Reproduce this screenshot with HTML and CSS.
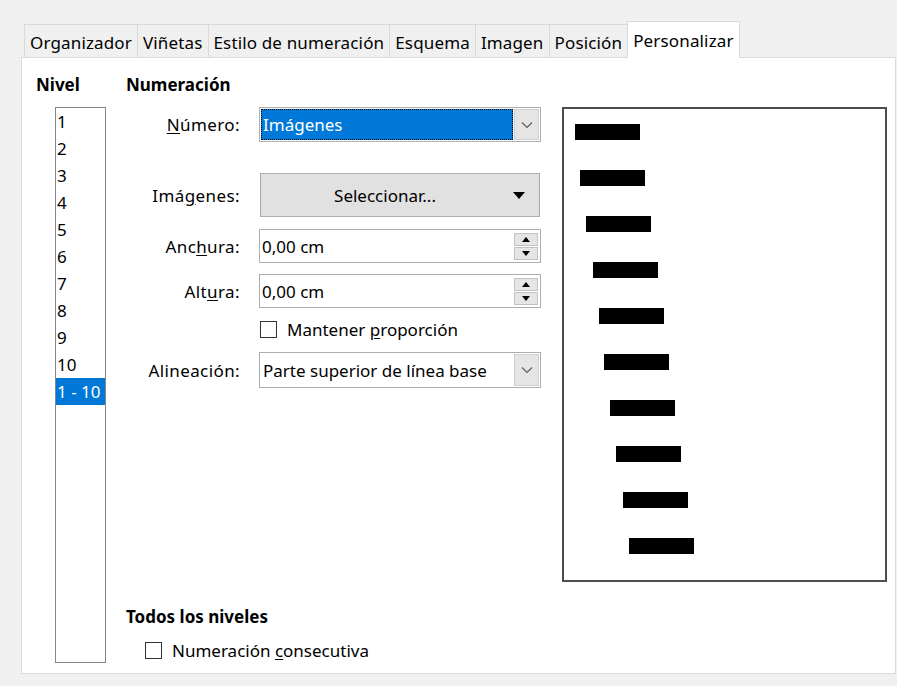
FILE: index.html
```html
<!DOCTYPE html>
<html lang="es">
<head>
<meta charset="utf-8">
<title>Numeración y viñetas</title>
<link rel="stylesheet" href="styles.css">
</head>
<body>
<div class="dialog">
  <div class="tabs">
    <div class="tab">Organizador</div>
    <div class="tab">Viñetas</div>
    <div class="tab">Estilo de numeración</div>
    <div class="tab">Esquema</div>
    <div class="tab">Imagen</div>
    <div class="tab">Posición</div>
    <div class="tab active">Personalizar</div>
  </div>
  <div class="panel">
    <div class="level-col">
      <div class="heading">Nivel</div>
      <ul class="level-list">
        <li>1</li><li>2</li><li>3</li><li>4</li><li>5</li>
        <li>6</li><li>7</li><li>8</li><li>9</li><li>10</li>
        <li class="selected">1 - 10</li>
      </ul>
    </div>
    <div class="main-col">
      <div class="heading">Numeración</div>
      <div class="content">
        <div class="form">
          <div class="row row-number">
            <label class="label"><u>N</u>úmero:</label>
            <div class="combo focused">
              <span class="combo-value">Imágenes</span>
              <span class="combo-btn"><svg width="12" height="8" viewBox="0 0 12 8"><polyline points="1,1.5 6,6.5 11,1.5" fill="none" stroke="#606060" stroke-width="1.2"/></svg></span>
            </div>
          </div>
          <div class="row row-images">
            <label class="label">Imá<u>g</u>enes:</label>
            <div class="menu-btn">
              <span class="menu-text">Seleccionar...</span>
              <svg class="menu-arrow" width="12" height="7" viewBox="0 0 12 7"><polygon points="0,0 12,0 6,7" fill="#000"/></svg>
            </div>
          </div>
          <div class="row row-width">
            <label class="label">Anc<u>h</u>ura:</label>
            <div class="spin">
              <span class="spin-value">0,00 cm</span>
              <span class="spin-btns">
                <span class="spin-btn"><svg width="8" height="5" viewBox="0 0 8 5"><polygon points="0,5 8,5 4,0" fill="#000"/></svg></span>
                <span class="spin-btn"><svg width="8" height="5" viewBox="0 0 8 5"><polygon points="0,0 8,0 4,5" fill="#000"/></svg></span>
              </span>
            </div>
          </div>
          <div class="row row-height">
            <label class="label">Alt<u>u</u>ra:</label>
            <div class="spin">
              <span class="spin-value">0,00 cm</span>
              <span class="spin-btns">
                <span class="spin-btn"><svg width="8" height="5" viewBox="0 0 8 5"><polygon points="0,5 8,5 4,0" fill="#000"/></svg></span>
                <span class="spin-btn"><svg width="8" height="5" viewBox="0 0 8 5"><polygon points="0,0 8,0 4,5" fill="#000"/></svg></span>
              </span>
            </div>
          </div>
          <div class="row row-check">
            <span class="label"></span>
            <label class="check"><span class="box"></span><span>Mantener <u>p</u>roporción</span></label>
          </div>
          <div class="row row-align">
            <label class="label">Alineación:</label>
            <div class="combo">
              <span class="combo-value">Parte superior de línea base</span>
              <span class="combo-btn"><svg width="12" height="8" viewBox="0 0 12 8"><polyline points="1,1.5 6,6.5 11,1.5" fill="none" stroke="#606060" stroke-width="1.2"/></svg></span>
            </div>
          </div>
        </div>
        <div class="preview">
          <span class="bar" style="margin-left:0px"></span>
          <span class="bar" style="margin-left:5px"></span>
          <span class="bar" style="margin-left:11px"></span>
          <span class="bar" style="margin-left:18px"></span>
          <span class="bar" style="margin-left:24px"></span>
          <span class="bar" style="margin-left:29px"></span>
          <span class="bar" style="margin-left:35px"></span>
          <span class="bar" style="margin-left:41px"></span>
          <span class="bar" style="margin-left:48px"></span>
          <span class="bar" style="margin-left:54px"></span>
        </div>
      </div>
      <div class="heading all-levels">Todos los niveles</div>
      <label class="check consecutive"><span class="box"></span><span>Numeración <u>c</u>onsecutiva</span></label>
    </div>
  </div>
</div>
</body>
</html>
```
FILE: styles.css
```css
* {
  box-sizing: border-box;
}

html, body {
  margin: 0;
  background: #f0f0f0;
}

body {
  font-family: "Noto Sans", "Open Sans", sans-serif;
  font-size: 17px;
  color: #000;
}

u {
  text-decoration: underline;
  text-underline-offset: 2px;
}

.dialog {
  width: 897px;
  height: 686px;
  padding: 21px 1px 0 21px;
}

/* tab strip */
.tabs {
  display: flex;
  align-items: flex-end;
  height: 36px;
  padding-left: 3px;
}

.tab {
  height: 33px;
  line-height: 31px;
  padding: 2px 5px 0;
  border: 1px solid #d9d9d9;
  border-bottom: none;
  margin-right: -1px;
  background: #f0f0f0;
  white-space: nowrap;
  letter-spacing: 0.15px;
}

.tab.active {
  height: 37px;
  padding-top: 3px;
  margin-bottom: -1px;
  background: #fff;
  position: relative;
  z-index: 1;
}

/* page body */
.panel {
  height: 617px;
  background: #fff;
  border: 1px solid #dadada;
  display: flex;
  padding: 17px 8px 0 14px;
  gap: 20px;
}

.heading {
  font-weight: bold;
  line-height: 20px;
  height: 20px;
  letter-spacing: 0;
  white-space: nowrap;
}

.level-col {
  width: 70px;
  flex: none;
}

.level-list {
  list-style: none;
  margin: 12px 0 0 19px;
  padding: 0;
  width: 51px;
  height: 556px;
  border: 1px solid #828790;
  background: #fff;
}

.level-list li {
  height: 27px;
  line-height: 27px;
  padding-left: 1px;
  white-space: nowrap;
}

.level-list li.selected {
  background: #0078d7;
  color: #fff;
}

.main-col {
  flex: 1;
  display: flex;
  flex-direction: column;
}

.content {
  display: flex;
  margin-top: 12px;
  height: 475px;
}

/* left-hand form */
.form {
  width: 415px;
  flex: none;
}

.row {
  display: flex;
  align-items: center;
}

.label {
  width: 114px;
  margin-right: 19px;
  text-align: right;
  flex: none;
  white-space: nowrap;
  letter-spacing: 0.4px;
}

.row-number { height: 35px; }
.row-images { height: 44px; margin-top: 31px; }
.row-width { height: 34px; margin-top: 12px; }
.row-height { height: 34px; margin-top: 11px; }
.row-check { height: 22px; margin-top: 10px; }
.row-align { height: 36px; margin-top: 12px; }

.combo {
  width: 282px;
  height: 100%;
  display: flex;
  border: 1px solid #adadad;
  background: #fff;
  padding: 1px;
}

.combo-value {
  flex: 1;
  display: flex;
  align-items: center;
  padding-left: 2px;
  white-space: nowrap;
  overflow: hidden;
}

.combo.focused .combo-value {
  background: #0078d7;
  color: #fff;
  outline: 1px dotted #000;
  outline-offset: -1px;
  border: 1px dotted #fff;
  padding-left: 1px;
}

.combo-btn {
  width: 25px;
  flex: none;
  margin-left: 1px;
  display: flex;
  align-items: center;
  justify-content: center;
  background: #e5e5e5;
  border: 1px solid #cfcfcf;
}

.menu-btn {
  width: 280px;
  margin-left: 1px;
  height: 100%;
  display: flex;
  align-items: center;
  background: #e1e1e1;
  border: 1px solid #adadad;
}

.menu-text {
  flex: 1;
  text-align: center;
  padding-right: 4px;
}

.menu-arrow {
  margin-right: 14px;
}

.spin {
  width: 282px;
  height: 100%;
  display: flex;
  align-items: center;
  border: 1px solid #adadad;
  background: #fff;
  padding: 0 2px 0 2px;
}

.spin-value {
  flex: 1;
}

.spin-btns {
  display: flex;
  flex-direction: column;
  width: 24px;
  gap: 1px;
}

.spin-btn {
  height: 13px;
  display: flex;
  align-items: center;
  justify-content: center;
  background: #e5e5e5;
  border: 1px solid #c2c2c2;
}

.check {
  display: flex;
  align-items: center;
  white-space: nowrap;
}

.box {
  width: 17px;
  height: 17px;
  border: 1px solid #333;
  background: #fff;
  margin-right: 10px;
  flex: none;
}

.row-check .check {
  margin-left: 1px;
}

/* preview canvas */
.preview {
  width: 325px;
  height: 475px;
  margin-left: 21px;
  border: 2px solid #4d4d4d;
  display: flex;
  flex-direction: column;
  gap: 30px;
  padding: 15px 0 0 11px;
}

.bar {
  display: block;
  width: 65px;
  height: 16px;
  background: #000;
  flex: none;
}

.all-levels {
  margin-top: 25px;
}

.consecutive {
  margin-top: 12px;
  margin-left: 19px;
  height: 22px;
}
```
